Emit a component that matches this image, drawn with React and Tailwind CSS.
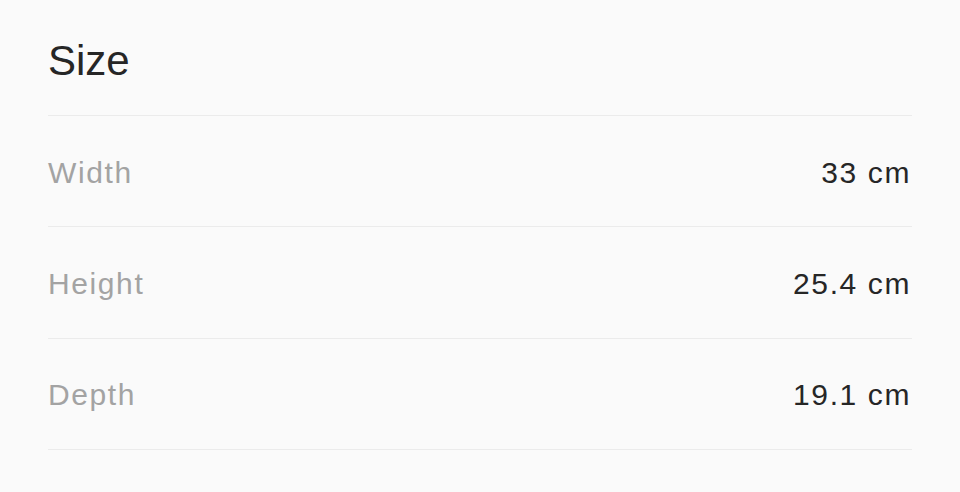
export default function App() {
  const rows = [
    ["Width", "33 cm"],
    ["Height", "25.4 cm"],
    ["Depth", "19.1 cm"],
  ];
  return (
    <div className="w-[960px] h-[492px] bg-[#fafafa] px-12 overflow-hidden" style={{ fontFamily: '"Liberation Sans", Arial, sans-serif' }}>
      <div className="h-[116px] flex items-center pt-[7px] border-b border-[#ebebeb]">
        <h2 className="text-[42px] leading-none text-[#262626]">Size</h2>
      </div>
      {rows.map(([k, v]) => (
        <div key={k} className="h-[111.3px] flex items-center justify-between pt-[3px] border-b border-[#ebebeb] text-[30px] leading-none tracking-[1.6px]">
          <span className="text-[#a3a3a3]">{k}</span>
          <span className="text-[#262626] mr-[1px]">{v}</span>
        </div>
      ))}
    </div>
  );
}
